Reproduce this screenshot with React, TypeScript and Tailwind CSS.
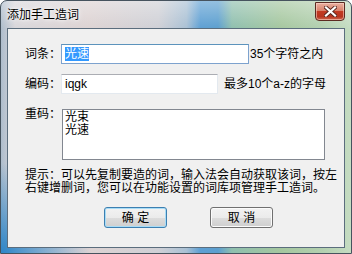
import React from "react";

const font = "font-['Liberation_Sans','Noto_Sans_CJK_SC',sans-serif]";

function CloseButton() {
  return (
    <div className="mt-[1px] mr-[6px] flex h-[19px] w-[30px] items-center justify-center rounded-b-[4px] border border-[#5c2a22] bg-[linear-gradient(#eab0a0,#d9826c_45%,#c23a22_50%,#b73520_80%,#d0694f)] shadow-[inset_0_0_0_1px_rgba(255,220,210,0.55)]">
      <svg width="13" height="11" viewBox="0 0 13 11">
        <path
          d="M2 1.5 L11 9.5 M11 1.5 L2 9.5"
          stroke="#5a2a22"
          strokeWidth="4"
          strokeLinecap="square"
        />
        <path
          d="M2 1.5 L11 9.5 M11 1.5 L2 9.5"
          stroke="#ffffff"
          strokeWidth="2.2"
          strokeLinecap="square"
        />
      </svg>
    </div>
  );
}

function Button({ label, primary }: { label: string; primary?: boolean }) {
  return (
    <div
      className={
        primary
          ? "flex h-[21px] w-[63px] items-center justify-center rounded-[3px] border border-[#3c7fb1] bg-[linear-gradient(#f2f2f2,#ebebeb_50%,#dddddd_50%,#cfcfcf)] shadow-[inset_0_0_0_1px_#a8dcf6] text-[12px] leading-none text-black"
          : "flex h-[21px] w-[63px] items-center justify-center rounded-[3px] border border-[#707070] bg-[linear-gradient(#f2f2f2,#ebebeb_50%,#dddddd_50%,#cfcfcf)] shadow-[inset_0_0_0_1px_#fbfbfb] text-[12px] leading-none text-black"
      }
    >
      {label}
    </div>
  );
}

export default function App() {
  return (
    <div
      className={`${font} relative flex h-[254px] w-[352px] flex-col overflow-hidden rounded-t-[7px] border border-[#46535e] bg-[linear-gradient(to_bottom,rgba(255,255,255,0.35),rgba(255,255,255,0)_28px),radial-gradient(circle_at_0%_100%,#2f86c8_0,rgba(47,134,200,0)_90px),linear-gradient(90deg,#aebdcc_0%,#d8d6da_4%,#ddd3d3_25%,#cfd0d6_45%,#a9c0d4_53%,#5d9fd3_57%,#5c9fcf_62%,#8fbfae_66%,#a5c79f_80%,#b3d0b0_92%,#c5dcc2_100%)]`}
    >
      {/* title bar */}
      <div className="flex h-[27px] shrink-0 items-start justify-between">
        <div className="pl-[6px] pt-[7px] text-[12px] leading-[14px] text-black [text-shadow:0_0_6px_#fff,0_0_3px_#fff]">
          添加手工造词
        </div>
        <CloseButton />
      </div>

      {/* client area */}
      <div className="mx-[6px] flex h-[220px] flex-col border border-[#5b6d7d] bg-[#f0f0f0] pl-[17px] pt-[15px] text-[12px] text-black">
        <div className="flex h-[20px] items-center">
          <div className="w-[36px]">词条：</div>
          <div className="flex h-[20px] w-[188px] items-center border border-[#7da2ce] border-t-[#5c93bc] bg-white pl-[3px]">
            <span className="bg-[#3399ff] leading-[14px] text-white">光速</span>
          </div>
          <div className="ml-[1px]">35个字符之内</div>
        </div>

        <div className="mt-[10px] flex h-[20px] items-center">
          <div className="w-[36px]">编码：</div>
          <div className="flex h-[20px] w-[157px] items-center border border-[#e3e9ef] border-t-[#abadb3] bg-white pl-[3px]">
            iqgk
          </div>
          <div className="ml-[6px]">最多10个a-z的字母</div>
        </div>

        <div className="mt-[15px] flex items-start">
          <div className="w-[37px] -mt-[2px] leading-[14px]">重码：</div>
          <div className="h-[51px] w-[263px] border border-[#828790] bg-white pl-[2px] pt-[1px] leading-[13px]">
            <div>光束</div>
            <div>光速</div>
          </div>
        </div>

        <div className="mt-[9px] w-[312px] leading-[13px]">
          提示：可以先复制要造的词，输入法会自动获取该词，按左右键增删词，您可以在功能设置的词库项管理手工造词。
        </div>

        <div className="mt-[12px] ml-[79px] flex gap-[43px]">
          <Button label="确 定" primary />
          <Button label="取 消" />
        </div>
      </div>
    </div>
  );
}
